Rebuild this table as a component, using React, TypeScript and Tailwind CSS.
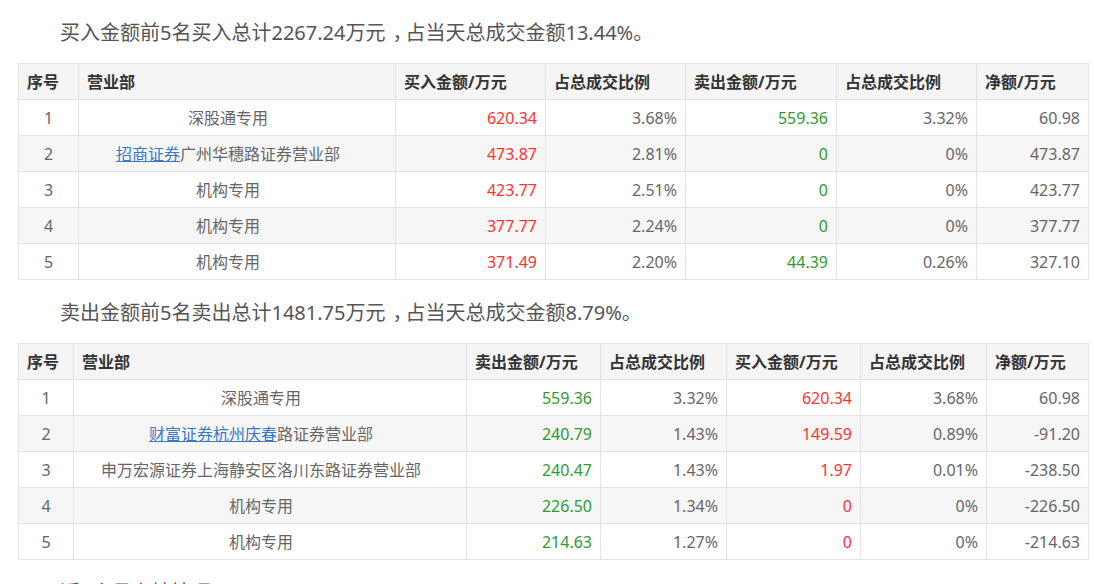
type Cell = { text: string; color?: "red" | "green" };

interface Row {
  no: number;
  dept: string;
  link?: string;
  cells: Cell[];
}

interface TableProps {
  headers: string[];
  widths: string[];
  rows: Row[];
}

const colorClass = (c?: "red" | "green") =>
  c === "red" ? "text-[#ff3333]" : c === "green" ? "text-[#2f9a2f]" : "text-[#666]";

function DataTable({ headers, widths, rows }: TableProps) {
  return (
    <table className="border-collapse table-fixed w-[1070px] ml-[18px] text-[16px]">
      <colgroup>
        {widths.map((w, i) => (
          <col key={i} className={w} />
        ))}
      </colgroup>
      <thead>
        <tr className="h-[36px] bg-[#f5f5f5]">
          {headers.map((h) => (
            <th
              key={h}
              className="border border-[#e2e2e2] text-left font-bold text-[#333] px-[8px] whitespace-nowrap"
            >
              {h}
            </th>
          ))}
        </tr>
      </thead>
      <tbody>
        {rows.map((row, idx) => (
          <tr key={row.no} className={`h-[36px] ${idx % 2 === 1 ? "bg-[#f6f6f6]" : "bg-white"}`}>
            <td className="border border-[#e2e2e2] text-center text-[#666]">{row.no}</td>
            <td className="border border-[#e2e2e2] text-center text-[#666] whitespace-nowrap pr-[18px]">
              {row.link && <a className="text-[#3a78c3] underline">{row.link}</a>}
              {row.dept}
            </td>
            {row.cells.map((c, i) => (
              <td
                key={i}
                className={`border border-[#e2e2e2] text-right pr-[8px] ${colorClass(c.color)}`}
              >
                {c.text}
              </td>
            ))}
          </tr>
        ))}
      </tbody>
    </table>
  );
}

function Summary({ before, after }: { before: string; after?: string }) {
  return (
    <p className="pl-[60px] h-[30px] leading-[30px] text-[20px] text-[#555] whitespace-nowrap">
      {before}
      {after !== undefined && (
        <>
          {/* centre the full-width comma */}
          <span className="ml-[7px] tracking-[-7px]">，</span>
          {after}
        </>
      )}
    </p>
  );
}

const buyRows: Row[] = [
  { no: 1, dept: "深股通专用", cells: [{ text: "620.34", color: "red" }, { text: "3.68%" }, { text: "559.36", color: "green" }, { text: "3.32%" }, { text: "60.98" }] },
  { no: 2, link: "招商证券", dept: "广州华穗路证券营业部", cells: [{ text: "473.87", color: "red" }, { text: "2.81%" }, { text: "0", color: "green" }, { text: "0%" }, { text: "473.87" }] },
  { no: 3, dept: "机构专用", cells: [{ text: "423.77", color: "red" }, { text: "2.51%" }, { text: "0", color: "green" }, { text: "0%" }, { text: "423.77" }] },
  { no: 4, dept: "机构专用", cells: [{ text: "377.77", color: "red" }, { text: "2.24%" }, { text: "0", color: "green" }, { text: "0%" }, { text: "377.77" }] },
  { no: 5, dept: "机构专用", cells: [{ text: "371.49", color: "red" }, { text: "2.20%" }, { text: "44.39", color: "green" }, { text: "0.26%" }, { text: "327.10" }] },
];

const sellRows: Row[] = [
  { no: 1, dept: "深股通专用", cells: [{ text: "559.36", color: "green" }, { text: "3.32%" }, { text: "620.34", color: "red" }, { text: "3.68%" }, { text: "60.98" }] },
  { no: 2, link: "财富证券杭州庆春", dept: "路证券营业部", cells: [{ text: "240.79", color: "green" }, { text: "1.43%" }, { text: "149.59", color: "red" }, { text: "0.89%" }, { text: "-91.20" }] },
  { no: 3, dept: "申万宏源证券上海静安区洛川东路证券营业部", cells: [{ text: "240.47", color: "green" }, { text: "1.43%" }, { text: "1.97", color: "red" }, { text: "0.01%" }, { text: "-238.50" }] },
  { no: 4, dept: "机构专用", cells: [{ text: "226.50", color: "green" }, { text: "1.34%" }, { text: "0", color: "red" }, { text: "0%" }, { text: "-226.50" }] },
  { no: 5, dept: "机构专用", cells: [{ text: "214.63", color: "green" }, { text: "1.27%" }, { text: "0", color: "red" }, { text: "0%" }, { text: "-214.63" }] },
];

export default function App() {
  return (
    <div
      className="w-[1114px] h-[584px] overflow-hidden bg-white pt-[18px]"
      style={{ fontFamily: '"Noto Sans", "Noto Sans CJK SC", sans-serif' }}
    >
      <Summary before="买入金额前5名买入总计2267.24万元" after="占当天总成交金额13.44%。" />
      <div className="mt-[15px]">
        <DataTable
          headers={["序号", "营业部", "买入金额/万元", "占总成交比例", "卖出金额/万元", "占总成交比例", "净额/万元"]}
          widths={["w-[60px]", "w-[317px]", "w-[150px]", "w-[140px]", "w-[151px]", "w-[140px]", "w-[112px]"]}
          rows={buyRows}
        />
      </div>
      <div className="mt-[18px]">
        <Summary before="卖出金额前5名卖出总计1481.75万元" after="占当天总成交金额8.79%。" />
      </div>
      <div className="mt-[15px]">
        <DataTable
          headers={["序号", "营业部", "卖出金额/万元", "占总成交比例", "买入金额/万元", "占总成交比例", "净额/万元"]}
          widths={["w-[55px]", "w-[393px]", "w-[134px]", "w-[126px]", "w-[134px]", "w-[126px]", "w-[102px]"]}
          rows={sellRows}
        />
      </div>
      <div className="mt-[18px]">
        <Summary before="近3个月上榜情况" />
      </div>
    </div>
  );
}
